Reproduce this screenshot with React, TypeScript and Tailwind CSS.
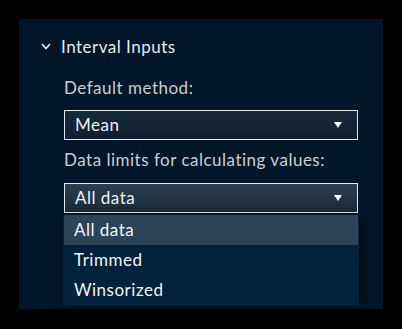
import { useState } from "react";

const options = ["All data", "Trimmed", "Winsorized"];

const Caret = () => (
  <svg width="8" height="6" viewBox="0 0 8 6" className="shrink-0">
    <path d="M0 0 H8 L4 6 Z" fill="#ffffff" />
  </svg>
);

const App = () => {
  const [limit] = useState("All data");

  return (
    <div
      className="w-[402px] h-[329px] bg-black pt-[19px] pl-[19px] tracking-[0.5px]"
      style={{ fontFamily: "Lato, 'Noto Sans', sans-serif" }}
    >
      <div className="relative w-[364px] h-[290px] bg-[#011729]">
        {/* section header */}
        <div className="flex items-center pt-[17px] pl-[22px] h-[38px]">
          <svg width="10" height="7" viewBox="0 0 10 7" className="mr-[10px]">
            <path d="M1 1 L5 5.5 L9 1" fill="none" stroke="#e6e9ec" strokeWidth="1.6" />
          </svg>
          <span className="text-[17px] text-[#e8eaed]">Interval Inputs</span>
        </div>

        <div className="pl-[45px] pr-[25px]">
          <div className="mt-[21px] text-[17px] leading-[20px] text-[#c9ced3]">
            Default method:
          </div>
          <div className="mt-[12px] flex h-[30px] items-center justify-between border border-[#e4e6e8] bg-gradient-to-b from-[#172a39] to-[#0f1f2d] pl-[10px] pr-[15px]">
            <span className="text-[17px] text-[#eef0f2]">Mean</span>
            <Caret />
          </div>

          <div className="mt-[10px] text-[17px] leading-[20px] text-[#c9ced3]">
            Data limits for calculating values:
          </div>
          <div className="mt-[13px] flex h-[30px] items-center justify-between border border-[#e4e6e8] bg-gradient-to-b from-[#2d3f4d] to-[#1a2a37] pl-[10px] pr-[15px]">
            <span className="text-[17px] text-[#eef0f2]">{limit}</span>
            <Caret />
          </div>
        </div>

        {/* open listbox */}
        <ul className="absolute left-[44px] top-[196px] w-[296px] bg-[#00223c] pb-[1px] shadow-[4px_4px_10px_rgba(0,0,0,0.55)]">
          {options.map((o) => (
            <li
              key={o}
              className={
                o === limit
                  ? "mx-[1px] flex h-[30px] items-center bg-[#2c4458] pl-[10px] text-[17px] text-[#f2f4f6]"
                  : "mx-[1px] flex h-[30px] items-center pl-[10px] text-[17px] text-[#f2f4f6]"
              }
            >
              {o}
            </li>
          ))}
        </ul>
      </div>
    </div>
  );
};

export default App;
